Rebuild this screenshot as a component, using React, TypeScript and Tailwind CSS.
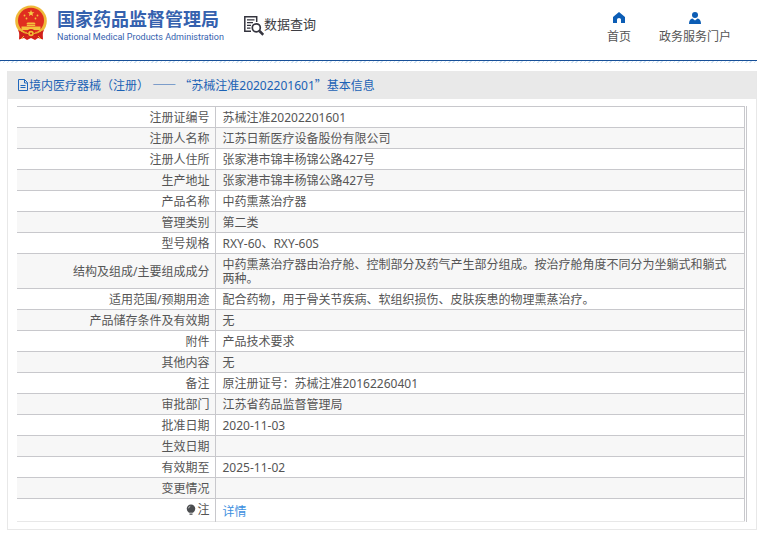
const cjk = "font-['Noto_Sans_CJK_SC',sans-serif]";

type Row = { label: string; value: string };

const rows: Row[] = [
  { label: '注册证编号', value: '苏械注准20202201601' },
  { label: '注册人名称', value: '江苏日新医疗设备股份有限公司' },
  { label: '注册人住所', value: '张家港市锦丰杨锦公路427号' },
  { label: '生产地址', value: '张家港市锦丰杨锦公路427号' },
  { label: '产品名称', value: '中药熏蒸治疗器' },
  { label: '管理类别', value: '第二类' },
  { label: '型号规格', value: 'RXY-60、RXY-60S' },
  {
    label: '结构及组成/主要组成成分',
    value: '中药熏蒸治疗器由治疗舱、控制部分及药气产生部分组成。按治疗舱角度不同分为坐躺式和躺式两种。',
  },
  { label: '适用范围/预期用途', value: '配合药物，用于骨关节疾病、软组织损伤、皮肤疾患的物理熏蒸治疗。' },
  { label: '产品储存条件及有效期', value: '无' },
  { label: '附件', value: '产品技术要求' },
  { label: '其他内容', value: '无' },
  { label: '备注', value: '原注册证号：苏械注准20162260401' },
  { label: '审批部门', value: '江苏省药品监督管理局' },
  { label: '批准日期', value: '2020-11-03' },
  { label: '生效日期', value: '' },
  { label: '有效期至', value: '2025-11-02' },
  { label: '变更情况', value: '' },
];

function Emblem() {
  return (
    <svg viewBox="0 0 32 36" className="h-9 w-8 shrink-0" aria-hidden="true">
      <path d="M4.500 24H27.500L28 34.500 23 33 20 35 16 33 12 35 9 33 4 34.500Z" fill="#d3201c" />
      <ellipse cx="16" cy="16" rx="15.800" ry="15.500" fill="#efb93a" />
      <ellipse cx="16" cy="15.500" rx="13" ry="12.800" fill="#e02d20" />
      <path d="M16 4.800l.9 2.400h2.500l-2 1.500.7 2.400-2.100-1.400-2.100 1.400.7-2.400-2-1.500h2.500z" fill="#f6cf45" />
      <g fill="#f4c13c">
        <circle cx="9.500" cy="10.500" r=".9" />
        <circle cx="11.500" cy="13.500" r=".9" />
        <circle cx="20.500" cy="13.500" r=".9" />
        <circle cx="22.500" cy="10.500" r=".9" />
        <path d="M12.500 17.500h7l1.200 1.500h-9.400zM11.800 19.500h8.400v1.500h-8.400zM6.500 21.500h19v3.500h-19z" />
      </g>
      <path d="M3 25q6 3 9 3a4 4 0 0 1 8 0q3 0 9-3l-2 5q-4 2-7 1l-4 2-4-2q-3 1-7-1z" fill="#cf201b" />
      <path d="M6 26q4 2.500 7 2.500M26 26q-4 2.500-7 2.500M9 31l-3 3M23 31l3 3" stroke="#efb932" strokeWidth="1" fill="none" />
      <circle cx="16" cy="28.500" r="2.800" fill="#f2bd37" />
      <circle cx="16" cy="28.500" r="1.100" fill="#d3201c" />
    </svg>
  );
}

function SearchDocIcon() {
  return (
    <svg viewBox="0 0 20 20" className="h-5 w-5 shrink-0" fill="none" stroke="#34343e" aria-hidden="true">
      <path d="M7 15.300H.800V.800h11.900V6" strokeWidth="1.500" />
      <path d="M3 3.800h7.500M3 6.600h6M3 9.400h4M3 12.200h3.500" strokeWidth="1.200" />
      <circle cx="12.300" cy="11.800" r="4" strokeWidth="1.700" />
      <path d="M15.500 15l3.800 3.800" strokeWidth="2.600" />
    </svg>
  );
}

function HomeIcon() {
  return (
    <svg viewBox="0 0 12 11" className="h-[11px] w-3" fill="#0c5db5" aria-hidden="true">
      <path d="M6 0 L12 5 V11 H8 V7.500 Q8 6 6 6 Q4 6 4 7.500 V11 H0 V5 Z" />
    </svg>
  );
}

function UserIcon() {
  return (
    <svg viewBox="0 0 12 12" className="h-3 w-3" fill="#0c5db5" aria-hidden="true">
      <circle cx="6" cy="3" r="3" />
      <path d="M0 12 Q0 7 3.500 6.500 L6 8.500 L8.500 6.500 Q12 7 12 12 Z" />
    </svg>
  );
}

function PageIcon() {
  return (
    <svg viewBox="0 0 11 12" className="h-3 w-[11px] shrink-0" fill="none" stroke="#2068bd" aria-hidden="true">
      <path d="M.500 .500H6.500L9.500 3.500V11.500H.500ZM6.500 .500V4H9.500" />
      <path d="M2.500 6.500H7.500M2.500 8.500H7.500" />
    </svg>
  );
}

function BulbIcon() {
  return (
    <svg viewBox="0 0 10 12" className="h-3 w-[10px]" aria-hidden="true">
      <path d="M5 .500a4.300 4.300 0 0 1 4.300 4.300Q9.300 7 7 8.700H3Q.700 7 .700 4.800A4.300 4.300 0 0 1 5 .500" fill="#4b4d50" />
      <path d="M3.500 9.500h3v1.300h-3z" fill="#4b4d50" />
      <path d="M2.500 4.300q.300-1.700 1.800-2" stroke="#d5d5d5" fill="none" strokeWidth=".8" />
    </svg>
  );
}

export default function App() {
  return (
    <div lang="zh-CN" className="min-h-screen bg-white font-['Noto_Sans','Noto_Sans_CJK_SC',sans-serif] text-xs text-[#555]">
      <header>
        <div className="flex h-[60px] items-start justify-between pr-[26px] pl-[15px]">
          <div className="flex items-start">
            <a href="#home" className="flex gap-[10px] pt-[5px]">
              <Emblem />
              <span className="flex flex-col pt-[2px] whitespace-nowrap text-[#3561ae]">
                <span className={`text-lg leading-[22px] font-bold ${cjk}`}>国家药品监督管理局</span>
                <span className="pt-px font-[Roboto,sans-serif] text-[9px] leading-[14px]">
                  National Medical Products Administration
                </span>
              </span>
            </a>
            <a href="#query" className="ml-5 flex pt-[16px] text-[#3d3d43]">
              <SearchDocIcon />
              <span className={`text-[13px] leading-4 whitespace-nowrap ${cjk}`}>数据查询</span>
            </a>
          </div>
          <nav className="flex gap-[28px] pt-[12px] text-[#555]">
            <a href="#index" className="flex flex-col items-center">
              <HomeIcon />
              <span className="pt-[5px] leading-[18px]">首页</span>
            </a>
            <a href="#portal" className="flex flex-col items-center">
              <UserIcon />
              <span className="pt-1 leading-[18px]">政务服务门户</span>
            </a>
          </nav>
        </div>
        <div className="h-px bg-[#174f98]" />
        <div className="h-[2px] bg-[repeating-linear-gradient(135deg,#d3e5f5_0_1px,#ffffff_1px_3px)]" />
      </header>

      <main className="mt-2 ml-[7px] border border-t-0 border-[#e8e8e8] pb-[7px]">
        <h1 className="flex h-7 items-center bg-[#e9e9e9] pl-[10px] text-[#1c62b5]">
          <PageIcon />
          <span className="pt-px">
            境内医疗器械（注册） <span className={cjk}>——</span> <span className={cjk}>“</span>
            苏械注准20202201601<span className={cjk}>”</span>基本信息
          </span>
        </h1>
        <div className="mt-[7px] mr-[9px] ml-[9px] border-r border-[#c8c8cc] pr-px">
          <table className="w-full table-fixed border-collapse border-t border-r border-b border-[#c8c8cc] border-b-[#e8e8e8]">
            <colgroup>
              <col className="w-[198px]" />
              <col />
            </colgroup>
            <tbody>
              {rows.map((row) => (
                <tr key={row.label} className="border-b border-[#c8c8cc] even:bg-[#f7f7f7]">
                  <th scope="row" className="h-[21px] border-r border-[#c8c8cc] pt-[2px] pr-[5px] text-right leading-[14px] font-normal">
                    {row.label}
                  </th>
                  <td className="px-[7px] pt-1 pb-[2px] leading-[14px]">{row.value}</td>
                </tr>
              ))}
              <tr>
                <th scope="row" className="h-[23px] border-r border-[#c8c8cc] pr-[5px] font-normal">
                  <span className="flex items-center justify-end gap-px leading-[14px]">
                    <BulbIcon />注
                  </span>
                </th>
                <td className="px-[7px] pt-1 leading-[14px]">
                  <a href="#detail" className="text-[#3c8fe0]">详情</a>
                </td>
              </tr>
            </tbody>
          </table>
        </div>
      </main>
    </div>
  );
}
